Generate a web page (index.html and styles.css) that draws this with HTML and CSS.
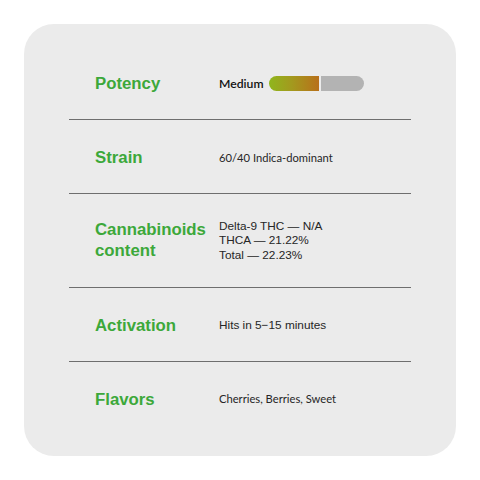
FILE: index.html
```html
<!DOCTYPE html>
<html>
<head>
<meta charset="utf-8">
<link rel="stylesheet" href="styles.css">
</head>
<body>
<div class="card">
  <div class="row first">
    <div class="label">Potency</div>
    <div class="value potency">
      <span class="humanist medium">Medium</span>
      <span class="bar"><span class="bar-fill"></span><span class="bar-rest"></span></span>
    </div>
  </div>
  <div class="row">
    <div class="label">Strain</div>
    <div class="value humanist">60/40 Indica-dominant</div>
  </div>
  <div class="row tight">
    <div class="label">Cannabinoids<br>content</div>
    <div class="value multi">Delta-9 THC — N/A<br>THCA — 21.22%<br>Total — 22.23%</div>
  </div>
  <div class="row">
    <div class="label">Activation</div>
    <div class="value">Hits in 5−15 minutes</div>
  </div>
  <div class="row last">
    <div class="label">Flavors</div>
    <div class="value humanist">Cherries, Berries, Sweet</div>
  </div>
</div>
</body>
</html>
```
FILE: styles.css
```css
html, body {
  margin: 0;
  padding: 0;
  background: #ffffff;
}
body {
  padding: 24px;
  font-family: "Liberation Sans", Arial, sans-serif;
}
.card {
  width: 432px;
  height: 432px;
  box-sizing: border-box;
  background: #ebebeb;
  border-radius: 30px;
  padding: 21px 45px 0 45px;
  display: flex;
  flex-direction: column;
}
.row {
  display: grid;
  grid-template-columns: 125px 1fr;
  align-items: center;
  padding: 27px 0 25px 25px;
  border-bottom: 1px solid #6e6e6e;
}
.row.first {
  padding-top: 28px;
}
.row.tight {
  padding-top: 25px;
  padding-bottom: 25px;
}
.row.last {
  border-bottom: none;
}
.label {
  color: #3ca83a;
  font-weight: bold;
  font-size: 16.8px;
  line-height: 21px;
  padding-left: 1px;
}
.value {
  color: #262626;
  font-size: 11.8px;
  line-height: 14px;
}
.humanist {
  font-family: Lato, "Open Sans", sans-serif;
  font-size: 11.2px;
}
.multi {
  line-height: 14.3px;
}
.potency {
  display: flex;
  align-items: center;
  gap: 5px;
}
.medium {
  font-weight: 600;
  font-size: 12.2px;
  color: #111;
}
.bar {
  display: flex;
  width: 95px;
  height: 15px;
  border-radius: 8px;
  overflow: hidden;
  gap: 2px;
  background: #ebebeb;
}
.bar-fill {
  width: 50px;
  background: linear-gradient(90deg, #8fb61d 0%, #a39a1e 45%, #b8701a 100%);
}
.bar-rest {
  flex: 1;
  background: #b3b3b3;
}
```
